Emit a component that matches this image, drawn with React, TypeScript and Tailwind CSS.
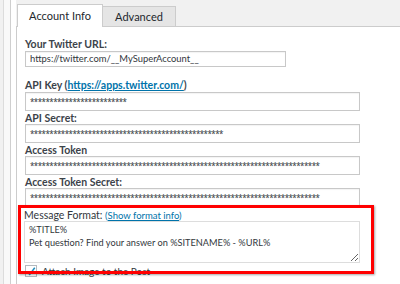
import React from 'react';

const font = { fontFamily: 'Lato, "Noto Sans", Arial, sans-serif' };

const Label = ({ children, className = '' }: { children: React.ReactNode; className?: string }) => (
  <div className={`h-[12px] leading-[12px] text-[10.5px] font-bold text-[#3c434a] whitespace-nowrap ${className}`}>
    {children}
  </div>
);

const Field = ({ value, width, className = '', secret = false }: { value: string; width: string; className?: string; secret?: boolean }) => (
  <div
    className={`${width} h-[19px] border border-[#c8c8c8] bg-white shadow-[inset_0_1px_1px_rgba(0,0,0,0.05)] flex items-center px-[4px] overflow-hidden ${className}`}
  >
    {secret ? (
      <span className="text-[8px] tracking-[-0.55px] text-[#32373c] leading-none" style={{ fontFamily: '"Noto Sans", sans-serif' }}>
        {value}
      </span>
    ) : (
      <span className="text-[9.4px] text-[#32373c] leading-none">{value}</span>
    )}
  </div>
);

const stars = (n: number) => '*'.repeat(n);

export default function App() {
  return (
    <div className="relative flex h-[284px] w-[400px] overflow-hidden bg-[#f1f1f1]" style={font}>
      <div className="w-[3px] shrink-0" />
      <div className="w-[7px] shrink-0 border-l border-[#dcdcdc] bg-[#f9f9f9]" />
      <div className="w-[6px] shrink-0 border-l border-[#cfcfcf] bg-white" />

      <div className="flex flex-1 flex-col">
        {/* tabs */}
        <div className="flex h-[27px] items-end bg-[#f1f1f1]">
          <div className="w-[1px] h-full border-b border-[#cccccc]" />
          <div className="flex h-[23px] w-[86px] items-center justify-center border border-b-0 border-[#cccccc] bg-white pt-[1px] text-[11px] text-[#23282d]">
            Account Info
          </div>
          <div className="flex h-[21px] w-[73px] items-center justify-center border border-l-0 border-[#cccccc] bg-[#e5e5e5] pt-[1px] text-[11px] text-[#23282d]">
            Advanced
          </div>
          <div className="flex-1 border-b border-[#cccccc]" />
        </div>

        {/* panel */}
        <div className="flex flex-1 flex-col border-l border-[#cccccc] bg-white pl-[8px]">
          <Label className="mt-[11px]">Your Twitter URL:</Label>
          <Field width="w-[261px]" className="mt-[1px] !h-[16px]" value="https://twitter.com/__MySuperAccount__" />

          <Label className="mt-[12px]">
            API Key (<span className="text-[#0073aa] underline">https://apps.twitter.com/</span>)
          </Label>
          <Field width="w-[335px]" className="mt-[1px]" secret value={stars(25)} />

          <Label className="mt-[1px]">API Secret:</Label>
          <Field width="w-[335px]" secret value={stars(50)} />

          <Label className="mt-[1px]">Access Token</Label>
          <Field width="w-[335px]" secret value={stars(75)} />

          <Label className="mt-[1px]">Access Token Secret:</Label>
          <Field width="w-[335px]" secret value={stars(75)} />

          <Label className="mt-[2px] -ml-[1px]">
            <span className="font-normal text-[10.5px] text-[#32373c]">Message Format:</span>{' '}
            <span className="font-normal text-[9.5px] text-[#0073aa]">
              (<span className="underline">Show format info</span>)
            </span>
          </Label>
          <textarea
            readOnly
            className="-ml-[1px] h-[42px] w-[336px] border border-[#dddddd] bg-white px-[4px] py-[1px] text-[9.2px] leading-[13px] text-[#32373c] outline-none"
            style={font}
            defaultValue={'%TITLE%\nPet question? Find your answer on %SITENAME% - %URL%'}
          />

          <div className="mt-[2px] flex items-center gap-[5px]">
            <div className="flex h-[12px] w-[12px] items-center justify-center border border-[#b4b9be] bg-white">
              <svg width="11" height="11" viewBox="0 0 12 12">
                <path d="M1.5 6.5 L4.5 9.5 L10.5 1.5" fill="none" stroke="#1e8cbe" strokeWidth="1.8" />
              </svg>
            </div>
            <span className="text-[10px] leading-[12px] text-[#32373c]">Attach Image to the Post</span>
          </div>
        </div>
      </div>

      {/* highlight annotation */}
      <div className="pointer-events-none absolute left-[18px] top-[205px] h-[69px] w-[356px] border-[3px] border-[#ff0000] shadow-[1px_1px_2px_rgba(0,0,0,0.35)]" />
    </div>
  );
}
